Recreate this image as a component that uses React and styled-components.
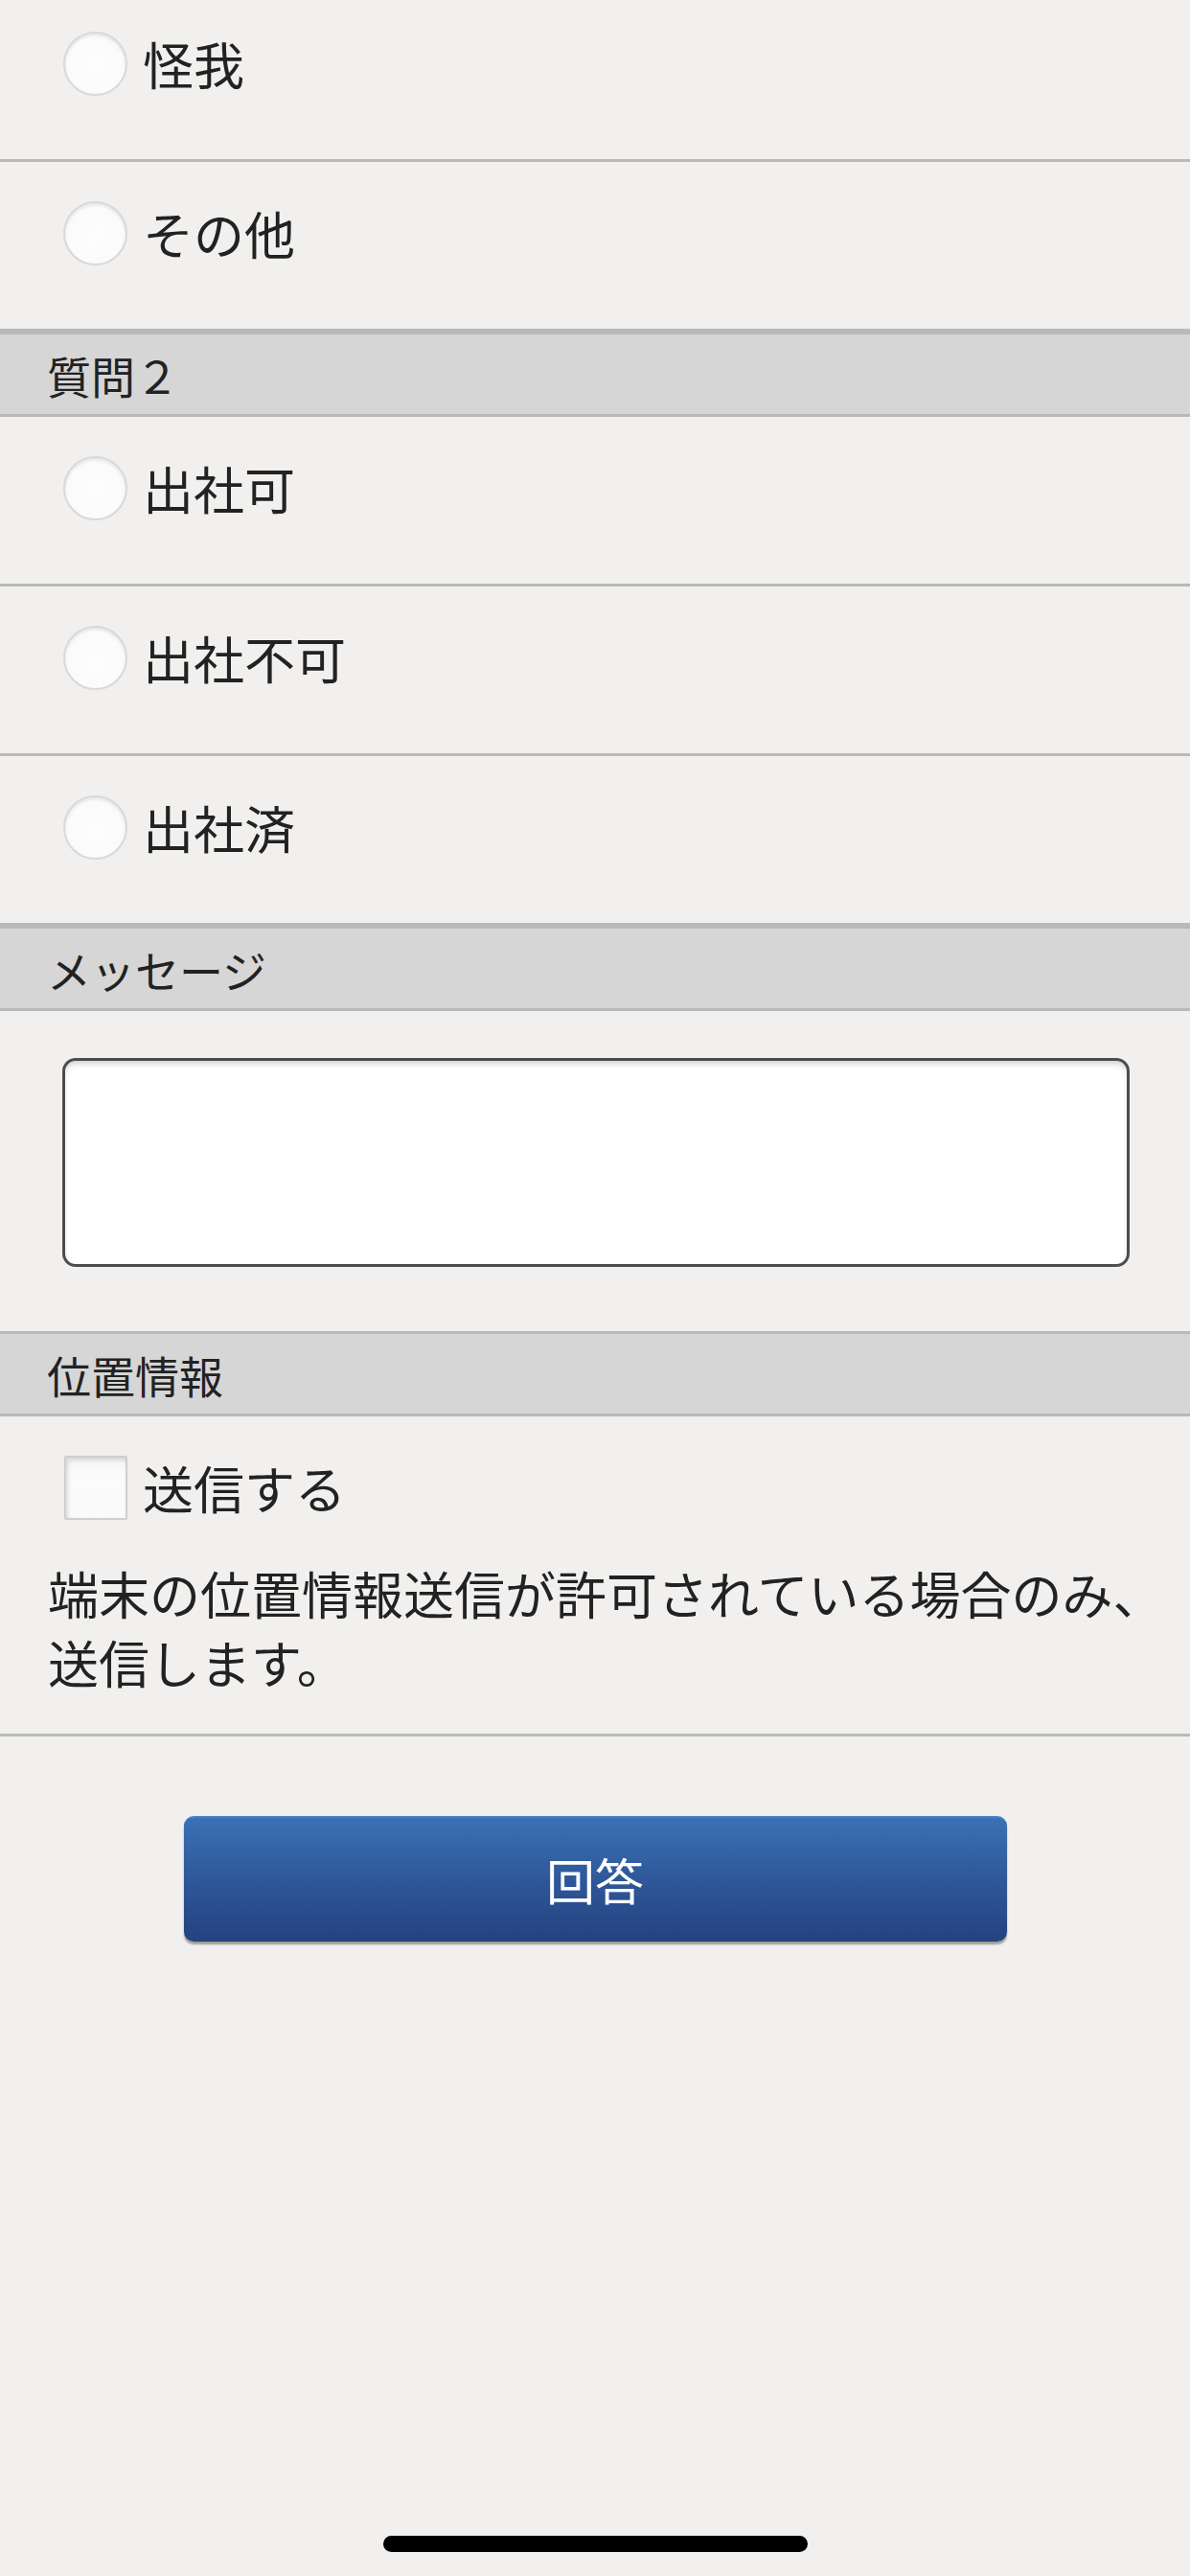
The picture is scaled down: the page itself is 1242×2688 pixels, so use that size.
import React from 'react';
import styled, { createGlobalStyle } from 'styled-components';

const GlobalStyle = createGlobalStyle`
  html, body {
    margin: 0;
    padding: 0;
    background: #f1f0ee;
  }
  body {
    font-family: "Noto Sans CJK JP", "Noto Sans", sans-serif;
    color: #222;
  }
`;

const Page = styled.div`
  position: relative;
  min-height: 2688px;
  overflow: hidden;
  background: #f1f0ee;
`;

const Form = styled.form`
  margin-top: -8px;
  display: flex;
  flex-direction: column;
`;

const SectionHeader = styled.div`
  height: 83px;
  display: flex;
  align-items: center;
  padding-left: 49px;
  background: #d6d6d6;
  border-top: 3px solid #b9b9b9;
  border-bottom: 3px solid #b9b9b9;
  font-size: 46px;
  line-height: 1;
  color: #222;
`;

const OptionRow = styled.label`
  display: flex;
  align-items: center;
  height: 67px;
  padding: 41px 0 66px 66px;
  border-bottom: 3px solid #b9b9b9;
  font-size: 53px;
  line-height: 67px;
  cursor: pointer;
`;

const Radio = styled.input.attrs({ type: 'radio' })`
  appearance: none;
  margin: 0 16px 0 0;
  width: 67px;
  height: 67px;
  flex: none;
  border-radius: 50%;
  border: 2px solid #d9d9d9;
  background: radial-gradient(circle at 50% 55%, #fdfdfd 0%, #fbfbfb 60%, #f2f2f2 100%);
  box-shadow: inset 0 2px 3px rgba(0, 0, 0, 0.08);
  box-sizing: border-box;
`;

const Checkbox = styled.input.attrs({ type: 'checkbox' })`
  appearance: none;
  margin: 0 16px 0 0;
  width: 66px;
  height: 67px;
  flex: none;
  border-radius: 2px;
  border: 2px solid #cfcfcf;
  background: linear-gradient(#f4f4f4, #fbfbfb 30%, #fafafa);
  box-shadow: inset 2px 3px 4px rgba(0, 0, 0, 0.12);
  box-sizing: border-box;
`;

const Label = styled.span`
  color: #222;
`;

const TextSection = styled.div`
  padding: 49px 63px 67px 65px;
`;

const MessageBox = styled.textarea`
  display: block;
  width: 100%;
  height: 218px;
  box-sizing: border-box;
  border: 3px solid #4d4d4d;
  border-radius: 14px;
  background: #fff;
  box-shadow: inset 0 5px 6px -2px rgba(0, 0, 0, 0.18);
  resize: none;
  font-family: inherit;
  font-size: 45px;
  outline: none;
`;

const LocationSection = styled.div`
  padding: 41px 20px 39px 50px;
  border-bottom: 3px solid #b9b9b9;
  display: flex;
  flex-direction: column;
  gap: 40px;
`;

const CheckRow = styled.label`
  display: flex;
  align-items: center;
  padding-left: 17px;
  height: 67px;
  font-size: 53px;
  line-height: 67px;
`;

const Note = styled.p`
  margin: 0;
  font-size: 53px;
  line-height: 72px;
  color: #222;
`;

const Actions = styled.div`
  display: flex;
  justify-content: center;
  padding-top: 83px;
`;

const SubmitButton = styled.button`
  width: 859px;
  height: 131px;
  border: none;
  border-top: 2px solid #4a7fc0;
  border-radius: 10px;
  background: linear-gradient(#3a71b5, #2d5597 55%, #24427f);
  box-shadow: 0 3px 2px rgba(0, 0, 0, 0.35);
  color: #fff;
  font-family: inherit;
  font-size: 51px;
  line-height: 1;
  cursor: pointer;
`;

const HomeIndicator = styled.div`
  position: absolute;
  left: 400px;
  bottom: 25px;
  width: 443px;
  height: 17px;
  border-radius: 9px;
  background: #000;
`;

const reasons = ['怪我', 'その他'];
const attendance = ['出社可', '出社不可', '出社済'];

export default function App() {
  return (
    <>
      <GlobalStyle />
      <Page>
        <Form onSubmit={(e) => e.preventDefault()}>
          {reasons.map((r) => (
            <OptionRow key={r}>
              <Radio name="q1" />
              <Label>{r}</Label>
            </OptionRow>
          ))}
          <SectionHeader>質問２</SectionHeader>
          {attendance.map((a) => (
            <OptionRow key={a}>
              <Radio name="q2" />
              <Label>{a}</Label>
            </OptionRow>
          ))}
          <SectionHeader>メッセージ</SectionHeader>
          <TextSection>
            <MessageBox />
          </TextSection>
          <SectionHeader>位置情報</SectionHeader>
          <LocationSection>
            <CheckRow>
              <Checkbox />
              <Label>送信する</Label>
            </CheckRow>
            <Note>端末の位置情報送信が許可されている場合のみ、送信します。</Note>
          </LocationSection>
          <Actions>
            <SubmitButton type="submit">回答</SubmitButton>
          </Actions>
        </Form>
        <HomeIndicator />
      </Page>
    </>
  );
}
